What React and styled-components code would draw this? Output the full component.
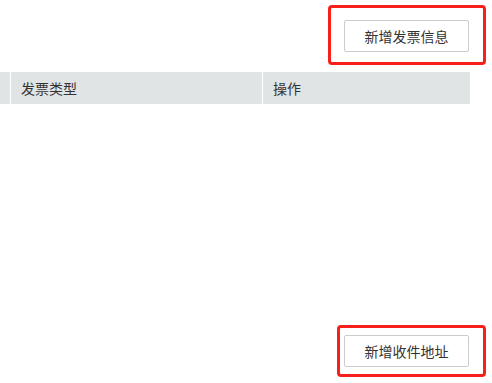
import styled, { createGlobalStyle } from "styled-components";

const GlobalStyle = createGlobalStyle`
  body {
    margin: 0;
    background: #fff;
    font-family: "Noto Sans CJK SC", "Microsoft YaHei", sans-serif;
  }
`;

const Page = styled.div`
  width: 492px;
  height: 383px;
  display: flex;
  flex-direction: column;
  overflow: hidden;
`;

const ActionBar = styled.div`
  display: flex;
  justify-content: flex-end;
  padding: ${({ top }) => top || 0}px 6px ${({ bottom }) => bottom || 0}px 0;
`;

const Highlight = styled.div`
  border: 3px solid #f7201a;
  border-radius: 4px;
  padding: ${({ pad }) => pad};
  display: flex;
`;

const Button = styled.button`
  width: 125px;
  height: 32px;
  background: #fff;
  border: 1px solid #cccccc;
  border-radius: 2px;
  color: #333;
  font-family: inherit;
  font-size: 14px;
  cursor: pointer;
  padding: 0;
`;

const TableHead = styled.div`
  margin-top: 7px;
  width: 470px;
  height: 32px;
  display: grid;
  grid-template-columns: 10px 251px 1fr;
  column-gap: 1px;
  background: #fff;
`;

const HeadCell = styled.div`
  background: #e1e4e4;
  color: #333;
  font-size: 14px;
  display: flex;
  align-items: center;
  padding-left: ${({ $edge }) => ($edge ? 0 : 10)}px;
`;

const Spacer = styled.div`
  flex: 1;
`;

export default function App() {
  return (
    <>
      <GlobalStyle />
      <Page>
        <ActionBar top={5}>
          <Highlight pad="12px 14px 10px 13px">
            <Button>新增发票信息</Button>
          </Highlight>
        </ActionBar>
        <TableHead>
          <HeadCell $edge />
          <HeadCell>发票类型</HeadCell>
          <HeadCell>操作</HeadCell>
        </TableHead>
        <Spacer />
        <ActionBar bottom={6}>
          <Highlight pad="7px 14px 7px 4px">
            <Button>新增收件地址</Button>
          </Highlight>
        </ActionBar>
      </Page>
    </>
  );
}
